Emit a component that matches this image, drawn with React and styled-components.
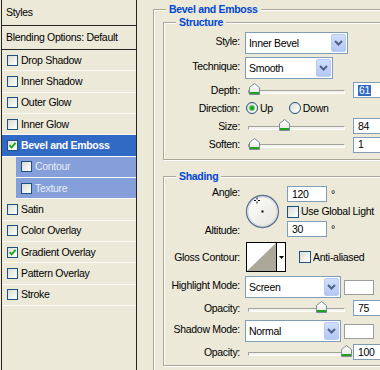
import React from 'react';
import styled, { createGlobalStyle } from 'styled-components';

const GlobalStyle = createGlobalStyle`
  html, body { margin: 0; padding: 0; }
  body {
    background: #ece9d8;
    font-family: "Liberation Sans", Arial, sans-serif;
    font-size: 10.5px;
    letter-spacing: -0.3px;
    line-height: 13px;
    color: #000;
    width: 380px;
    height: 370px;
    overflow: hidden;
  }
`;

const styleItems = [
  { name: 'Drop Shadow' },
  { name: 'Inner Shadow' },
  { name: 'Outer Glow' },
  { name: 'Inner Glow' },
  { name: 'Bevel and Emboss', checked: true, selected: true },
  { name: 'Contour', sub: true },
  { name: 'Texture', sub: true },
  { name: 'Satin' },
  { name: 'Color Overlay' },
  { name: 'Gradient Overlay', checked: true },
  { name: 'Pattern Overlay' },
  { name: 'Stroke' },
];

export default function App() {
  return (
    <>
      <GlobalStyle />
      <Dialog>
        <StylesPanel>
          <PanelHeader>Styles</PanelHeader>
          <BlendRow>Blending Options: Default</BlendRow>
          {styleItems.map((item) => (
            <StyleItem key={item.name} $sub={item.sub} $selected={item.selected}>
              <CheckBox checked={item.checked} />
              <span>{item.name}</span>
            </StyleItem>
          ))}
        </StylesPanel>

        <Settings>
          <Group>
            <GroupTitle $outer>Bevel and Emboss</GroupTitle>

            <SubGroup>
              <GroupTitle>Structure</GroupTitle>
              <Row $h={22} $mb={3}>
                <Label $raise>Style:</Label>
                <Select width={103} value="Inner Bevel" />
              </Row>
              <Row $h={22} $mb={2}>
                <Label $raise>Technique:</Label>
                <Select width={88} value="Smooth" />
              </Row>
              <Row $h={18}>
                <Label>Depth:</Label>
                <Slider thumb={9} />
                <NumberBox $gap={4}>
                  <Selected>61</Selected>
                </NumberBox>
              </Row>
              <Row $h={18}>
                <Label>Direction:</Label>
                <RadioGroup>
                  <RadioOption>
                    <Radio checked />
                    Up
                  </RadioOption>
                  <RadioOption>
                    <Radio />
                    Down
                  </RadioOption>
                </RadioGroup>
              </Row>
              <Row $h={18}>
                <Label>Size:</Label>
                <Slider thumb={39} />
                <NumberBox $gap={4}>84</NumberBox>
              </Row>
              <Row $h={19}>
                <Label>Soften:</Label>
                <Slider thumb={9} />
                <NumberBox $gap={4}>1</NumberBox>
              </Row>
            </SubGroup>

            <SubGroup $shading>
              <GroupTitle>Shading</GroupTitle>
              <AngleRow>
                <LabelStack>
                  <span>Angle:</span>
                  <span>Altitude:</span>
                </LabelStack>
                <AngleDial />
                <AngleFields>
                  <Field>
                    <NumberBox>120</NumberBox>
                    <Degree>°</Degree>
                  </Field>
                  <CheckLine>
                    <CheckBox size={12} />
                    Use Global Light
                  </CheckLine>
                  <Field>
                    <NumberBox>30</NumberBox>
                    <Degree>°</Degree>
                  </Field>
                </AngleFields>
              </AngleRow>
              <Row $h={30} $mb={4}>
                <Label>Gloss Contour:</Label>
                <ContourPicker />
                <CheckLine $gap={13}>
                  <CheckBox size={12} />
                  Anti-aliased
                </CheckLine>
              </Row>
              <Row $h={22} $mb={1}>
                <Label $raise>Highlight Mode:</Label>
                <Select width={96} value="Screen" />
                <Swatch />
              </Row>
              <Row $h={18} $mb={3}>
                <Label>Opacity:</Label>
                <Slider thumb={76.5} />
                <NumberBox $gap={4}>75</NumberBox>
              </Row>
              <Row $h={22} $mb={1}>
                <Label $raise>Shadow Mode:</Label>
                <Select width={96} value="Normal" />
                <Swatch />
              </Row>
              <Row $h={18}>
                <Label>Opacity:</Label>
                <Slider thumb={101.5} />
                <NumberBox $gap={4}>100</NumberBox>
              </Row>
            </SubGroup>
          </Group>
        </Settings>
      </Dialog>
    </>
  );
}

function CheckBox({ checked, size = 11 }) {
  return (
    <Box $size={size}>
      {checked && (
        <svg width="9" height="9" viewBox="0 0 9 9">
          <path d="M1.5 4.2 L3.6 6.4 L7.6 1.8" fill="none" stroke="#21a121" strokeWidth="1.8" />
        </svg>
      )}
    </Box>
  );
}

function Radio({ checked }) {
  return <RadioCircle>{checked && <RadioDot />}</RadioCircle>;
}

function Select({ width, value }) {
  return (
    <SelectBox style={{ width }}>
      <span>{value}</span>
      <SelectArrow>
        <svg width="9" height="6" viewBox="0 0 9 6">
          <path d="M1 1 L4.5 4.5 L8 1" fill="none" stroke="#4d6185" strokeWidth="2" />
        </svg>
      </SelectArrow>
    </SelectBox>
  );
}

function Slider({ thumb }) {
  return (
    <SliderBox>
      <Track />
      <Thumb style={{ left: thumb - 5.5 }}>
        <svg width="11" height="12" viewBox="0 0 11 12">
          <defs>
            <linearGradient id="thumbFill" x1="0" y1="0" x2="0" y2="1">
              <stop offset="0" stopColor="#ffffff" />
              <stop offset="1" stopColor="#e6e6de" />
            </linearGradient>
          </defs>
          <path d="M0.5 4.5 L5.5 0.5 L10.5 4.5 V11.5 H0.5 Z" fill="url(#thumbFill)" stroke="#7c8a9c" />
          <rect x="1" y="9" width="9" height="2" fill="#21a121" />
        </svg>
      </Thumb>
    </SliderBox>
  );
}

function AngleDial() {
  return (
    <DialSvg width="35" height="35" viewBox="0 0 35 35">
      <defs>
        <linearGradient id="dialFill" x1="0" y1="0" x2="1" y2="1">
          <stop offset="0" stopColor="#ffffff" />
          <stop offset="1" stopColor="#e4e3dc" />
        </linearGradient>
      </defs>
      <circle cx="17.5" cy="17.5" r="16" fill="url(#dialFill)" stroke="#5d6f92" strokeWidth="1.3" />
      <circle cx="17.5" cy="17.5" r="14.6" fill="none" stroke="#c9cfdc" strokeWidth="0.8" />
      <rect x="16.5" y="16.5" width="2" height="2" fill="#000" />
      <path d="M9 6.5 H11 M13 6.5 H15 M12 3.5 V5.5 M12 7.5 V9.5" stroke="#000" strokeWidth="1" />
    </DialSvg>
  );
}

function ContourPicker() {
  return (
    <ContourBox>
      <svg width="29" height="28" viewBox="0 0 29 28">
        <rect width="29" height="28" fill="#fff" />
        <path d="M0 28 L29 0 V28 Z" fill="#aca899" />
      </svg>
      <ContourArrow>
        <svg width="5" height="3" viewBox="0 0 5 3">
          <path d="M0 0 H5 L2.5 3 Z" fill="#000" />
        </svg>
      </ContourArrow>
    </ContourBox>
  );
}

const Dialog = styled.div`
  display: flex;
  width: 380px;
  height: 370px;
  overflow: hidden;
  background: #ece9d8;
`;

const StylesPanel = styled.div`
  flex: none;
  width: 134px;
  height: 370px;
  margin-left: 1px;
  border-left: 1px solid #262626;
  border-right: 1px solid #262626;
  display: flex;
  flex-direction: column;
`;

const PanelHeader = styled.div`
  height: 25px;
  border-bottom: 1px solid #262626;
  display: flex;
  align-items: center;
  padding-left: 4px;
`;

const BlendRow = styled(PanelHeader)`
  height: 23px;
`;

const StyleItem = styled.div`
  flex: none;
  height: 21.33px;
  box-sizing: border-box;
  border-bottom: 1px solid #fbfbf5;
  display: flex;
  align-items: center;
  gap: 3px;
  padding-left: 5px;
  margin-left: ${(p) => (p.$sub ? 14 : 0)}px;
  background: ${(p) => (p.$selected ? '#316ac5' : p.$sub ? '#859fdb' : 'transparent')};
  color: ${(p) => (p.$selected ? '#fff' : p.$sub ? '#e6ebf7' : '#000')};
  font-weight: ${(p) => (p.$selected ? 700 : 400)};
`;

const Box = styled.span`
  flex: none;
  width: ${(p) => p.$size}px;
  height: ${(p) => p.$size}px;
  box-sizing: border-box;
  border: 1px solid #1c5180;
  background: linear-gradient(135deg, #dcdcd5, #ffffff);
  display: flex;
  align-items: center;
  justify-content: center;
`;

const Settings = styled.div`
  flex: none;
  padding-left: 16px;
`;

const Group = styled.fieldset`
  margin: 3px 0 0;
  padding: 0 0 0 9px;
  width: 260px;
  min-height: 400px;
  border: 1px solid #aca899;
  box-shadow: inset 1px 1px 0 #fff, 1px 1px 0 #fff;
`;

const SubGroup = styled.fieldset`
  margin: ${(p) => (p.$shading ? 10 : 0)}px 0 0;
  padding: 3px 0 ${(p) => (p.$shading ? 4 : 5)}px 0;
  border: 1px solid #aca899;
  box-shadow: inset 1px 1px 0 #fff, 1px 1px 0 #fff;
  display: flex;
  flex-direction: column;
`;

const GroupTitle = styled.legend`
  margin-left: ${(p) => (p.$outer ? 3 : 12)}px;
  padding: 0 3px;
  background: #ece9d8;
  color: #0046d5;
  font-weight: 700;
  line-height: 13px;
`;

const Row = styled.div`
  display: flex;
  align-items: center;
  height: ${(p) => p.$h}px;
  margin-bottom: ${(p) => p.$mb || 0}px;
`;

const Label = styled.span`
  flex: none;
  width: 76px;
  margin-right: 5px;
  text-align: right;
  white-space: nowrap;
  padding-bottom: ${(p) => (p.$raise ? 3 : 0)}px;
`;

const SelectBox = styled.div`
  flex: none;
  height: 22px;
  box-sizing: border-box;
  border: 1px solid #7f9db9;
  background: #fff;
  display: flex;
  align-items: center;
  justify-content: space-between;
  padding: 1px 1px 1px 3px;
`;

const SelectArrow = styled.span`
  width: 15px;
  height: 18px;
  box-sizing: border-box;
  border: 1px solid #b9cbf3;
  border-radius: 2px;
  background: linear-gradient(#d0defc, #b3c7f5);
  display: flex;
  align-items: center;
  justify-content: center;
`;

const SliderBox = styled.div`
  position: relative;
  flex: none;
  width: 104px;
  height: 14px;
  display: flex;
  align-items: center;
`;

const Track = styled.div`
  flex: 1;
  height: 4px;
  margin: 3px 4px 0 3px;
  box-sizing: border-box;
  border: 1px solid;
  border-color: #a3a29a #fff #fff #a3a29a;
  background: #f3f2ec;
`;

const Thumb = styled.span`
  position: absolute;
  top: 0;
  line-height: 0;
`;

const NumberBox = styled.div`
  flex: none;
  width: 40px;
  height: 16px;
  box-sizing: border-box;
  margin-left: ${(p) => p.$gap || 0}px;
  border: 1px solid #7f9db9;
  background: #fff;
  padding-left: 4px;
  display: flex;
  align-items: center;
`;

const Selected = styled.span`
  background: #316ac5;
  color: #fff;
  padding: 0 1px;
  line-height: 11px;
`;

const RadioGroup = styled.div`
  display: flex;
  align-items: center;
  gap: 16px;
  margin-left: 1px;
`;

const RadioOption = styled.span`
  display: flex;
  align-items: center;
  gap: 2px;
`;

const RadioCircle = styled.span`
  width: 12px;
  height: 12px;
  box-sizing: border-box;
  border-radius: 50%;
  border: 1px solid #1c5180;
  background: linear-gradient(135deg, #dcdcd5, #ffffff);
  display: flex;
  align-items: center;
  justify-content: center;
`;

const RadioDot = styled.span`
  width: 4px;
  height: 4px;
  border-radius: 50%;
  background: #21a121;
  box-shadow: 0 0 0 1px #6ccb6c;
`;

const AngleRow = styled.div`
  display: flex;
  align-items: stretch;
  height: 51px;
  margin-bottom: 5px;
`;

const LabelStack = styled.div`
  flex: none;
  width: 76px;
  margin-right: 5px;
  display: flex;
  flex-direction: column;
  justify-content: space-between;
  align-items: flex-end;
`;

const DialSvg = styled.svg`
  flex: none;
  align-self: center;
`;

const AngleFields = styled.div`
  display: flex;
  flex-direction: column;
  justify-content: space-between;
  margin-left: 7px;
`;

const Field = styled.div`
  display: flex;
  align-items: center;
`;

const Degree = styled.span`
  margin-left: 4px;
`;

const CheckLine = styled.span`
  display: flex;
  align-items: center;
  gap: 2px;
  margin-left: ${(p) => p.$gap || 0}px;
  white-space: nowrap;
`;

const ContourBox = styled.div`
  flex: none;
  display: flex;
  margin-left: 1px;
  height: 30px;
  box-sizing: border-box;
  border: 1px solid #000;
  line-height: 0;
`;

const ContourArrow = styled.span`
  width: 8px;
  border-left: 1px solid #000;
  background: #fff;
  display: flex;
  align-items: center;
  justify-content: center;
`;

const Swatch = styled.span`
  flex: none;
  width: 30px;
  height: 15px;
  box-sizing: border-box;
  margin-left: 3px;
  border: 1px solid #9d9d9d;
  background: #fff;
`;
